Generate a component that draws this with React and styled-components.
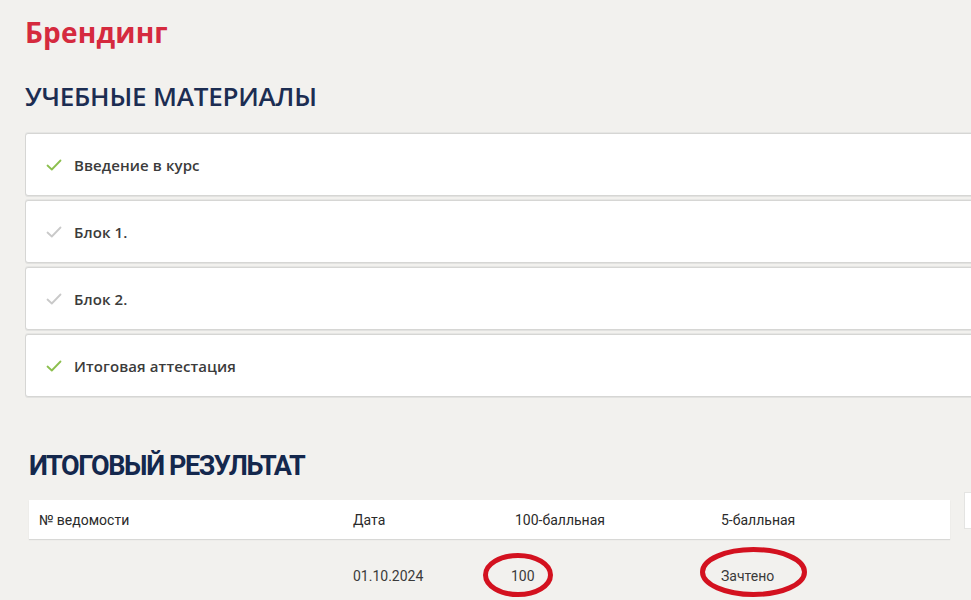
import React from "react";
import styled, { createGlobalStyle } from "styled-components";

const Global = createGlobalStyle`
  html, body { margin: 0; padding: 0; overflow: hidden; background: #f2f1ee; }
  body { font-family: "Open Sans", "Noto Sans", sans-serif; }
`;

const Page = styled.div`
  width: 971px;
  height: 600px;
  overflow: hidden;
  background: #f2f1ee;
`;

const Top = styled.section`
  padding: 14px 0 0 25px;
`;

const CourseTitle = styled.h1`
  margin: 0;
  font-family: "Open Sans", sans-serif;
  font-weight: 700;
  font-size: 28px;
  line-height: 36px;
  letter-spacing: 0.2px;
  color: #d52a3e;
`;

const SectionTitle = styled.h2`
  margin: 30px 0 0;
  font-family: "Open Sans", sans-serif;
  font-weight: 600;
  font-size: 26px;
  line-height: 32px;
  letter-spacing: -0.2px;
  color: #1c2d52;
`;

const CardList = styled.div`
  margin-top: 21px;
  width: 1000px;
  display: flex;
  flex-direction: column;
  gap: 4px;
`;

const Card = styled.div`
  height: 63px;
  box-sizing: border-box;
  background: #fff;
  border: 1px solid #d6d6d4;
  border-radius: 3px;
  box-shadow: 0 1px 0 #e2e2e0, 0 -1px 0 #e6e6e4;
  display: flex;
  align-items: center;
  padding-left: 20px;
  gap: 12px;
`;

const CardLabel = styled.span`
  font-family: "Open Sans", sans-serif;
  font-weight: 600;
  font-size: 15px;
  letter-spacing: 0.1px;
  color: #3b3b3b;
`;

const Check = ({ done }) => (
  <svg width="16" height="12" viewBox="0 0 16 12" fill="none">
    <path
      d="M1.5 6.5 L5.8 10.5 L14.5 1.5"
      stroke={done ? "#8cbf4e" : "#c9c9c9"}
      strokeWidth="1.8"
      strokeLinecap="round"
      strokeLinejoin="round"
    />
  </svg>
);

const Result = styled.section`
  padding: 53px 21px 0 29px;
  position: relative;
`;

const ResultTitle = styled.h2`
  margin: 0;
  font-family: "Roboto", "Liberation Sans", sans-serif;
  font-weight: 700;
  font-size: 27px;
  line-height: 32px;
  letter-spacing: -1.4px;
  color: #14284d;
`;

const Table = styled.div`
  margin-top: 18px;
  font-family: "Roboto", "Liberation Sans", sans-serif;
  font-size: 14px;
  line-height: 16px;
  color: #2f2f2f;
`;

const Row = styled.div`
  display: grid;
  grid-template-columns: 314px 162px 206px 1fr;
  align-items: center;
  height: ${(p) => (p.head ? "39px" : "74px")};
  background: ${(p) => (p.head ? "#fff" : "transparent")};
  box-shadow: ${(p) => (p.head ? "0 1px 1px #d8d8d6" : "none")};
  padding-left: 10px;
  color: ${(p) => (p.head ? "#2a2a2a" : "#3a3a3a")};
`;

const Cell = styled.div`
  position: relative;
  margin-left: ${(p) => p.shift || 0}px;
`;

const Mark = styled.svg`
  position: absolute;
  pointer-events: none;
  left: ${(p) => p.l}px;
  top: ${(p) => p.t}px;
`;

const SideTab = styled.div`
  position: absolute;
  right: 0;
  top: 95px;
  width: 6px;
  height: 35px;
  background: #fff;
  border: 1px solid #e4e4e2;
  border-right: none;
`;

export default function App() {
  const items = [
    { t: "Введение в курс", done: true },
    { t: "Блок 1.", done: false },
    { t: "Блок 2.", done: false },
    { t: "Итоговая аттестация", done: true },
  ];
  return (
    <Page>
      <Global />
      <Top>
        <CourseTitle>Брендинг</CourseTitle>
        <SectionTitle>УЧЕБНЫЕ МАТЕРИАЛЫ</SectionTitle>
        <CardList>
          {items.map((it) => (
            <Card key={it.t}>
              <Check done={it.done} />
              <CardLabel>{it.t}</CardLabel>
            </Card>
          ))}
        </CardList>
      </Top>
      <Result>
        <ResultTitle>ИТОГОВЫЙ РЕЗУЛЬТАТ</ResultTitle>
        <SideTab />
        <Table>
          <Row head>
            <Cell>№ ведомости</Cell>
            <Cell>Дата</Cell>
            <Cell>100-балльная</Cell>
            <Cell>5-балльная</Cell>
          </Row>
          <Row>
            <Cell />
            <Cell>01.10.2024</Cell>
            <Cell shift={-4}>
              100
              <Mark l={-28} t={-15} width="70" height="44" viewBox="0 0 70 44">
                <ellipse cx="35" cy="22" rx="32.5" ry="19.5" fill="none" stroke="#d3111f" strokeWidth="5" />
              </Mark>
            </Cell>
            <Cell>
              Зачтено
              <Mark l={-21} t={-21} width="107" height="50" viewBox="0 0 107 50">
                <ellipse cx="53.5" cy="25" rx="51" ry="22.5" fill="none" stroke="#d3111f" strokeWidth="5" />
              </Mark>
            </Cell>
          </Row>
        </Table>
      </Result>
    </Page>
  );
}
